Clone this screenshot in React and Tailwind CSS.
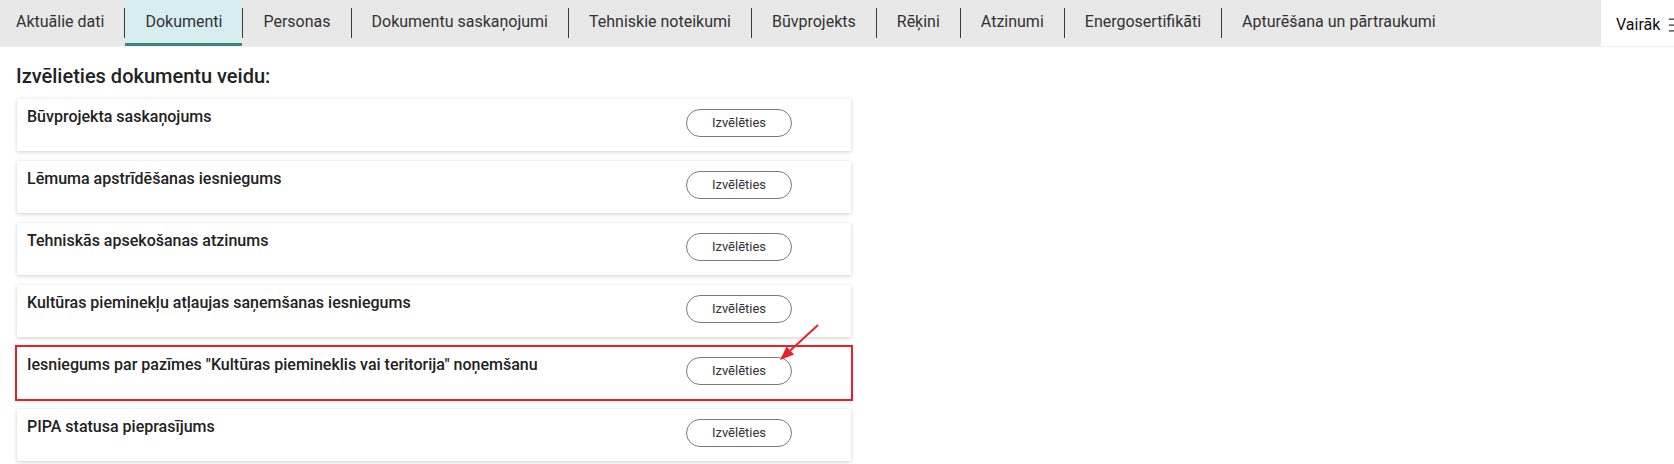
import { Menu } from 'lucide-react';

const tabs = [
  'Aktuālie dati',
  'Dokumenti',
  'Personas',
  'Dokumentu saskaņojumi',
  'Tehniskie noteikumi',
  'Būvprojekts',
  'Rēķini',
  'Atzinumi',
  'Energosertifikāti',
  'Apturēšana un pārtraukumi',
];

const docTypes = [
  'Būvprojekta saskaņojums',
  'Lēmuma apstrīdēšanas iesniegums',
  'Tehniskās apsekošanas atzinums',
  'Kultūras pieminekļu atļaujas saņemšanas iesniegums',
  'Iesniegums par pazīmes "Kultūras piemineklis vai teritorija" noņemšanu',
  'PIPA statusa pieprasījums',
];

function TabBar({ active }) {
  return (
    <div className="flex h-[46px] bg-[#e8e8e8] shadow-[0_1px_1px_rgba(0,0,0,0.06)]">
      <div className="flex flex-1 h-full overflow-hidden">
        {tabs.map((t, i) => (
          <div key={t} className="flex h-full">
            {i > 0 && <div className="w-px h-[30px] bg-[#3a3a3a] self-center" />}
            <div
              className={`h-full flex items-center border-b-[3px] text-[16px] text-[#333] whitespace-nowrap ${
                i === 0 ? 'pl-4 pr-5' : 'px-5'
              } ${i === active ? 'bg-[#d7eef0] border-[#3b8380]' : 'border-transparent'}`}
            >
              {t}
            </div>
          </div>
        ))}
      </div>
      {/* "more" menu, cut off by the window edge */}
      <div className="w-[73px] h-full bg-white flex items-center pl-[15px] pt-[4px] overflow-hidden">
        <span className="shrink-0 text-[16px] text-[#111] whitespace-nowrap">Vairāk</span>
        <Menu className="ml-[6px] shrink-0 w-5 h-5 text-[#333]" strokeWidth={1.5} />
      </div>
    </div>
  );
}

function DocCard({ title, highlighted }) {
  return (
    <div
      className={`ml-[17px] w-[834px] h-[52px] bg-white flex items-start justify-between shadow-[0_1px_4px_rgba(0,0,0,0.2)] ${
        highlighted ? 'outline-2 outline-[#e3222b]' : ''
      }`}
    >
      <span className="pl-[10px] pt-2 text-[16px] leading-5 font-medium text-[#222]">{title}</span>
      <button className="mt-[10px] mr-[59px] w-[106px] h-[28px] rounded-full border border-[#7a7a7a] bg-white text-[13px] text-[#333] flex items-center justify-center">
        Izvēlēties
      </button>
    </div>
  );
}

export default function App() {
  return (
    <div className="relative w-[1674px] h-[464px] bg-white overflow-hidden font-['Roboto',sans-serif]">
      <TabBar active={1} />
      <h2 className="mt-4 mb-[9px] pl-4 text-[20px] leading-7 font-medium text-[#222]">
        Izvēlieties dokumentu veidu:
      </h2>
      <div className="flex flex-col gap-[10px]">
        {docTypes.map((d, i) => (
          <DocCard key={d} title={d} highlighted={i === 4} />
        ))}
      </div>

      {/* red pointer arrow over the highlighted row */}
      <svg className="absolute left-[770px] top-[318px]" width="56" height="50" viewBox="0 0 56 50">
        <line x1="48" y1="7" x2="20.3" y2="32.5" stroke="#e8212a" strokeWidth="2" />
        <polygon points="10,42 24,36.5 16.6,28.5" fill="#e8212a" />
      </svg>
    </div>
  );
}
